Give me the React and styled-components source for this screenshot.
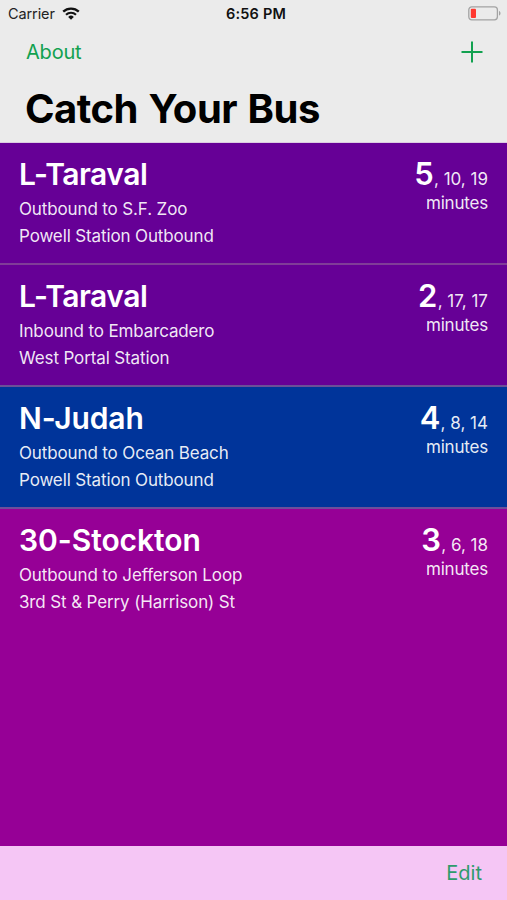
import React from 'react';
import styled, { createGlobalStyle } from 'styled-components';

const GlobalStyle = createGlobalStyle`
  * {
    box-sizing: border-box;
  }

  body {
    margin: 0;
    font-family: Inter, 'Liberation Sans', sans-serif;
    font-feature-settings: 'calt' 0;
  }
`;

const Screen = styled.div`
  display: flex;
  flex-direction: column;
  width: 507px;
  height: 900px;
  overflow: hidden;
  background: #960096;
`;

const Header = styled.header`
  height: 143px;
  flex: none;
  background: #ebebeb;
  border-bottom: 1px solid #dccbe2;
`;

const StatusBar = styled.div`
  display: grid;
  grid-template-columns: 1fr auto 1fr;
  align-items: center;
  height: 27px;
  padding: 0 6px 0 8px;
  font-size: 14.5px;
  color: #222;
`;

const Carrier = styled.div`
  display: flex;
  align-items: center;
  gap: 7px;
  letter-spacing: -0.1px;
`;

const Time = styled.span`
  padding-left: 3px;
  font-size: 14.5px;
  font-weight: 600;
  letter-spacing: 0.2px;
  color: #111;
`;

const BatterySlot = styled.div`
  display: flex;
  justify-content: flex-end;
`;

const NavBar = styled.nav`
  display: flex;
  align-items: center;
  justify-content: space-between;
  height: 50px;
  padding: 0 24px 0 26px;
`;

const TextButton = styled.button`
  padding: 0;
  border: 0;
  background: none;
  font-family: inherit;
  font-size: 20px;
  line-height: 24px;
  letter-spacing: ${props => props.$spacing || '0'};
  color: ${props => props.$color || '#12a150'};
`;

const IconButton = styled(TextButton)`
  display: flex;
`;

const Title = styled.h1`
  margin: 0;
  padding: 7px 0 0 25px;
  font-size: 40px;
  line-height: 50px;
  font-weight: 700;
  letter-spacing: -0.5px;
  word-spacing: 1.5px;
  color: #000;
`;

const StopList = styled.ul`
  flex: 1;
  margin: 0;
  padding: 0;
  list-style: none;
`;

const StopRow = styled.li`
  display: flex;
  justify-content: space-between;
  height: 122px;
  padding: 12px 19px 0 19px;
  background: ${props => props.$color};
  border-bottom: ${props => (props.$line ? `2px solid ${props.$line}` : 'none')};
  color: white;
`;

const Line = styled.h2`
  margin: 0 0 3px;
  font-size: 30px;
  line-height: 38px;
  font-weight: 600;
  letter-spacing: ${props => props.$spacing};
`;

const Detail = styled.p`
  margin: 0;
  font-size: 17px;
  line-height: 27px;
  letter-spacing: -0.13px;
  color: rgba(255, 255, 255, 0.92);
`;

const Arrivals = styled.div`
  text-align: right;
  font-size: 17px;
  color: rgba(255, 255, 255, 0.92);
`;

const Times = styled.div`
  line-height: 38px;
  white-space: nowrap;
`;

const Next = styled.span`
  font-size: 31px;
  font-weight: 600;
  letter-spacing: 0.3px;
  color: white;
`;

const Unit = styled.div`
  margin-top: -8px;
  line-height: 27px;
  letter-spacing: -0.2px;
`;

const Toolbar = styled.footer`
  display: flex;
  align-items: center;
  justify-content: flex-end;
  flex: none;
  height: 54px;
  padding-right: 25px;
  background: #f5c6f5;
`;

const stops = [
  {
    line: 'L-Taraval',
    spacing: '-0.5px',
    direction: 'Outbound to S.F. Zoo',
    stop: 'Powell Station Outbound',
    next: '5',
    later: ', 10, 19',
    color: '#660096',
    divider: '#803c98',
  },
  {
    line: 'L-Taraval',
    spacing: '-0.5px',
    direction: 'Inbound to Embarcadero',
    stop: 'West Portal Station',
    next: '2',
    later: ', 17, 17',
    color: '#660096',
    divider: '#6a4f98',
  },
  {
    line: 'N-Judah',
    spacing: '-0.1px',
    direction: 'Outbound to Ocean Beach',
    stop: 'Powell Station Outbound',
    next: '4',
    later: ', 8, 14',
    color: '#00349a',
    divider: '#6b4f9b',
  },
  {
    line: '30-Stockton',
    spacing: '-0.05px',
    direction: 'Outbound to Jefferson Loop',
    stop: '3rd St & Perry (Harrison) St',
    next: '3',
    later: ', 6, 18',
    color: '#960096',
  },
];

function WifiIcon() {
  return (
    <svg width="18" height="13" viewBox="0 0 18 13" fill="none" stroke="#111">
      <path d="M1.2 4.7a11.2 11.2 0 0 1 15.6 0" strokeWidth="2.3" />
      <path d="M4 7.7a7.2 7.2 0 0 1 10 0" strokeWidth="2.1" />
      <path d="M6.2 9.9a4 4 0 0 1 5.6 0L9 12.7z" fill="#111" stroke="none" />
    </svg>
  );
}

function BatteryIcon() {
  return (
    <svg width="33" height="15" viewBox="0 0 33 15" fill="none">
      <rect x="0.8" y="0.8" width="28.6" height="13" rx="3" stroke="#a3a3a3" strokeWidth="1.3" />
      <rect x="2.8" y="2.7" width="5.2" height="9.2" rx="1" fill="#ff3830" />
      <path d="M31 5v4.6c2-.6 2-4 0-4.6z" fill="#a3a3a3" />
    </svg>
  );
}

function PlusIcon() {
  return (
    <svg width="22" height="22" viewBox="0 0 22 22" stroke="#12a150" strokeWidth="2">
      <path d="M11 0.5v21M0.5 11h21" />
    </svg>
  );
}

function App() {
  return (
    <Screen>
      <GlobalStyle />
      <Header>
        <StatusBar>
          <Carrier>
            Carrier
            <WifiIcon />
          </Carrier>
          <Time>6:56 PM</Time>
          <BatterySlot>
            <BatteryIcon />
          </BatterySlot>
        </StatusBar>
        <NavBar>
          <TextButton $spacing="-0.2px">About</TextButton>
          <IconButton aria-label="Add">
            <PlusIcon />
          </IconButton>
        </NavBar>
        <Title>Catch Your Bus</Title>
      </Header>
      <StopList>
        {stops.map((item, index) => (
          <StopRow key={index} $color={item.color} $line={item.divider}>
            <div>
              <Line $spacing={item.spacing}>{item.line}</Line>
              <Detail>{item.direction}</Detail>
              <Detail>{item.stop}</Detail>
            </div>
            <Arrivals>
              <Times>
                <Next>{item.next}</Next>
                {item.later}
              </Times>
              <Unit>minutes</Unit>
            </Arrivals>
          </StopRow>
        ))}
      </StopList>
      <Toolbar>
        <TextButton $color="#2e9b6c">Edit</TextButton>
      </Toolbar>
    </Screen>
  );
}

export default App;
